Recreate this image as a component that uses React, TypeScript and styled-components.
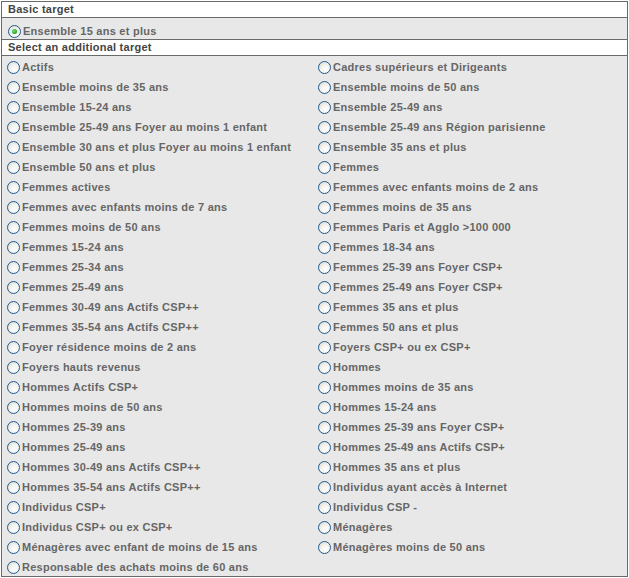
import React from "react";
import styled, { createGlobalStyle } from "styled-components";

const GlobalStyle = createGlobalStyle`
  body {
    margin: 0;
    background: #ffffff;
    font-family: "Liberation Sans", Arial, sans-serif;
  }
`;

const Panel = styled.div`
  margin: 1px 0 0 1px;
  width: 625px;
  border: 1px solid #6a6a6a;
  background: #e8e8e8;
  font-size: 11px;
  font-weight: bold;
  letter-spacing: 0.25px;
`;

const Header = styled.div`
  height: 15px;
  line-height: 15px;
  padding-left: 6px;
  background: #ffffff;
  color: #444444;
  border-bottom: 1px solid #6a6a6a;
`;

const BasicRow = styled.div`
  height: 22px;
  padding: 3px 0 0 5px;
  box-sizing: border-box;
  display: flex;
  align-items: center;
  border-bottom: 1px solid #6a6a6a;
`;

const List = styled.div`
  display: grid;
  grid-template-columns: 311px 1fr;
  padding-left: 4px;
`;

const Option = styled.label`
  height: 20px;
  box-sizing: border-box;
  padding-top: 2px;
  display: flex;
  align-items: center;
  gap: 2px;
  color: #666666;
  white-space: nowrap;
  cursor: pointer;
`;

const Radio = styled.span<{ $checked?: boolean }>`
  position: relative;
  width: 11px;
  height: 11px;
  margin-left: 1px;
  border-radius: 50%;
  border: 1px solid #1f5b8f;
  background: radial-gradient(circle at 60% 65%, #ffffff 0%, #f2f2ee 45%, #d6d6ce 100%);
  flex: none;

  &::after {
    content: "";
    display: ${(p) => (p.$checked ? "block" : "none")};
    position: absolute;
    left: 3px;
    top: 3px;
    width: 5px;
    height: 5px;
    border-radius: 50%;
    background: radial-gradient(circle at 40% 40%, #7fe07f 0%, #25a825 60%, #1a8a1a 100%);
  }
`;

const left = [
  "Actifs",
  "Ensemble moins de 35 ans",
  "Ensemble 15-24 ans",
  "Ensemble 25-49 ans Foyer au moins 1 enfant",
  "Ensemble 30 ans et plus Foyer au moins 1 enfant",
  "Ensemble 50 ans et plus",
  "Femmes actives",
  "Femmes avec enfants moins de 7 ans",
  "Femmes moins de 50 ans",
  "Femmes 15-24 ans",
  "Femmes 25-34 ans",
  "Femmes 25-49 ans",
  "Femmes 30-49 ans Actifs CSP++",
  "Femmes 35-54 ans Actifs CSP++",
  "Foyer résidence moins de 2 ans",
  "Foyers hauts revenus",
  "Hommes Actifs CSP+",
  "Hommes moins de 50 ans",
  "Hommes 25-39 ans",
  "Hommes 25-49 ans",
  "Hommes 30-49 ans Actifs CSP++",
  "Hommes 35-54 ans Actifs CSP++",
  "Individus CSP+",
  "Individus CSP+ ou ex CSP+",
  "Ménagères avec enfant de moins de 15 ans",
  "Responsable des achats moins de 60 ans",
];

const right = [
  "Cadres supérieurs et Dirigeants",
  "Ensemble moins de 50 ans",
  "Ensemble 25-49 ans",
  "Ensemble 25-49 ans Région parisienne",
  "Ensemble 35 ans et plus",
  "Femmes",
  "Femmes avec enfants moins de 2 ans",
  "Femmes moins de 35 ans",
  "Femmes Paris et Agglo >100 000",
  "Femmes 18-34 ans",
  "Femmes 25-39 ans Foyer CSP+",
  "Femmes 25-49 ans Foyer CSP+",
  "Femmes 35 ans et plus",
  "Femmes 50 ans et plus",
  "Foyers CSP+ ou ex CSP+",
  "Hommes",
  "Hommes moins de 35 ans",
  "Hommes 15-24 ans",
  "Hommes 25-39 ans Foyer CSP+",
  "Hommes 25-49 ans Actifs CSP+",
  "Hommes 35 ans et plus",
  "Individus ayant accès à Internet",
  "Individus CSP -",
  "Ménagères",
  "Ménagères moins de 50 ans",
];

const App = () => {
  const cells: (string | null)[] = [];
  left.forEach((l, i) => {
    cells.push(l);
    cells.push(right[i] ?? null);
  });

  return (
    <>
      <GlobalStyle />
      <Panel>
        <Header>Basic target</Header>
        <BasicRow>
          <Option>
            <Radio $checked />
            Ensemble 15 ans et plus
          </Option>
        </BasicRow>
        <Header>Select an additional target</Header>
        <List>
          {cells.map((c, i) =>
            c ? (
              <Option key={i}>
                <Radio />
                {c}
              </Option>
            ) : (
              <span key={i} />
            )
          )}
        </List>
      </Panel>
    </>
  );
};

export default App;
